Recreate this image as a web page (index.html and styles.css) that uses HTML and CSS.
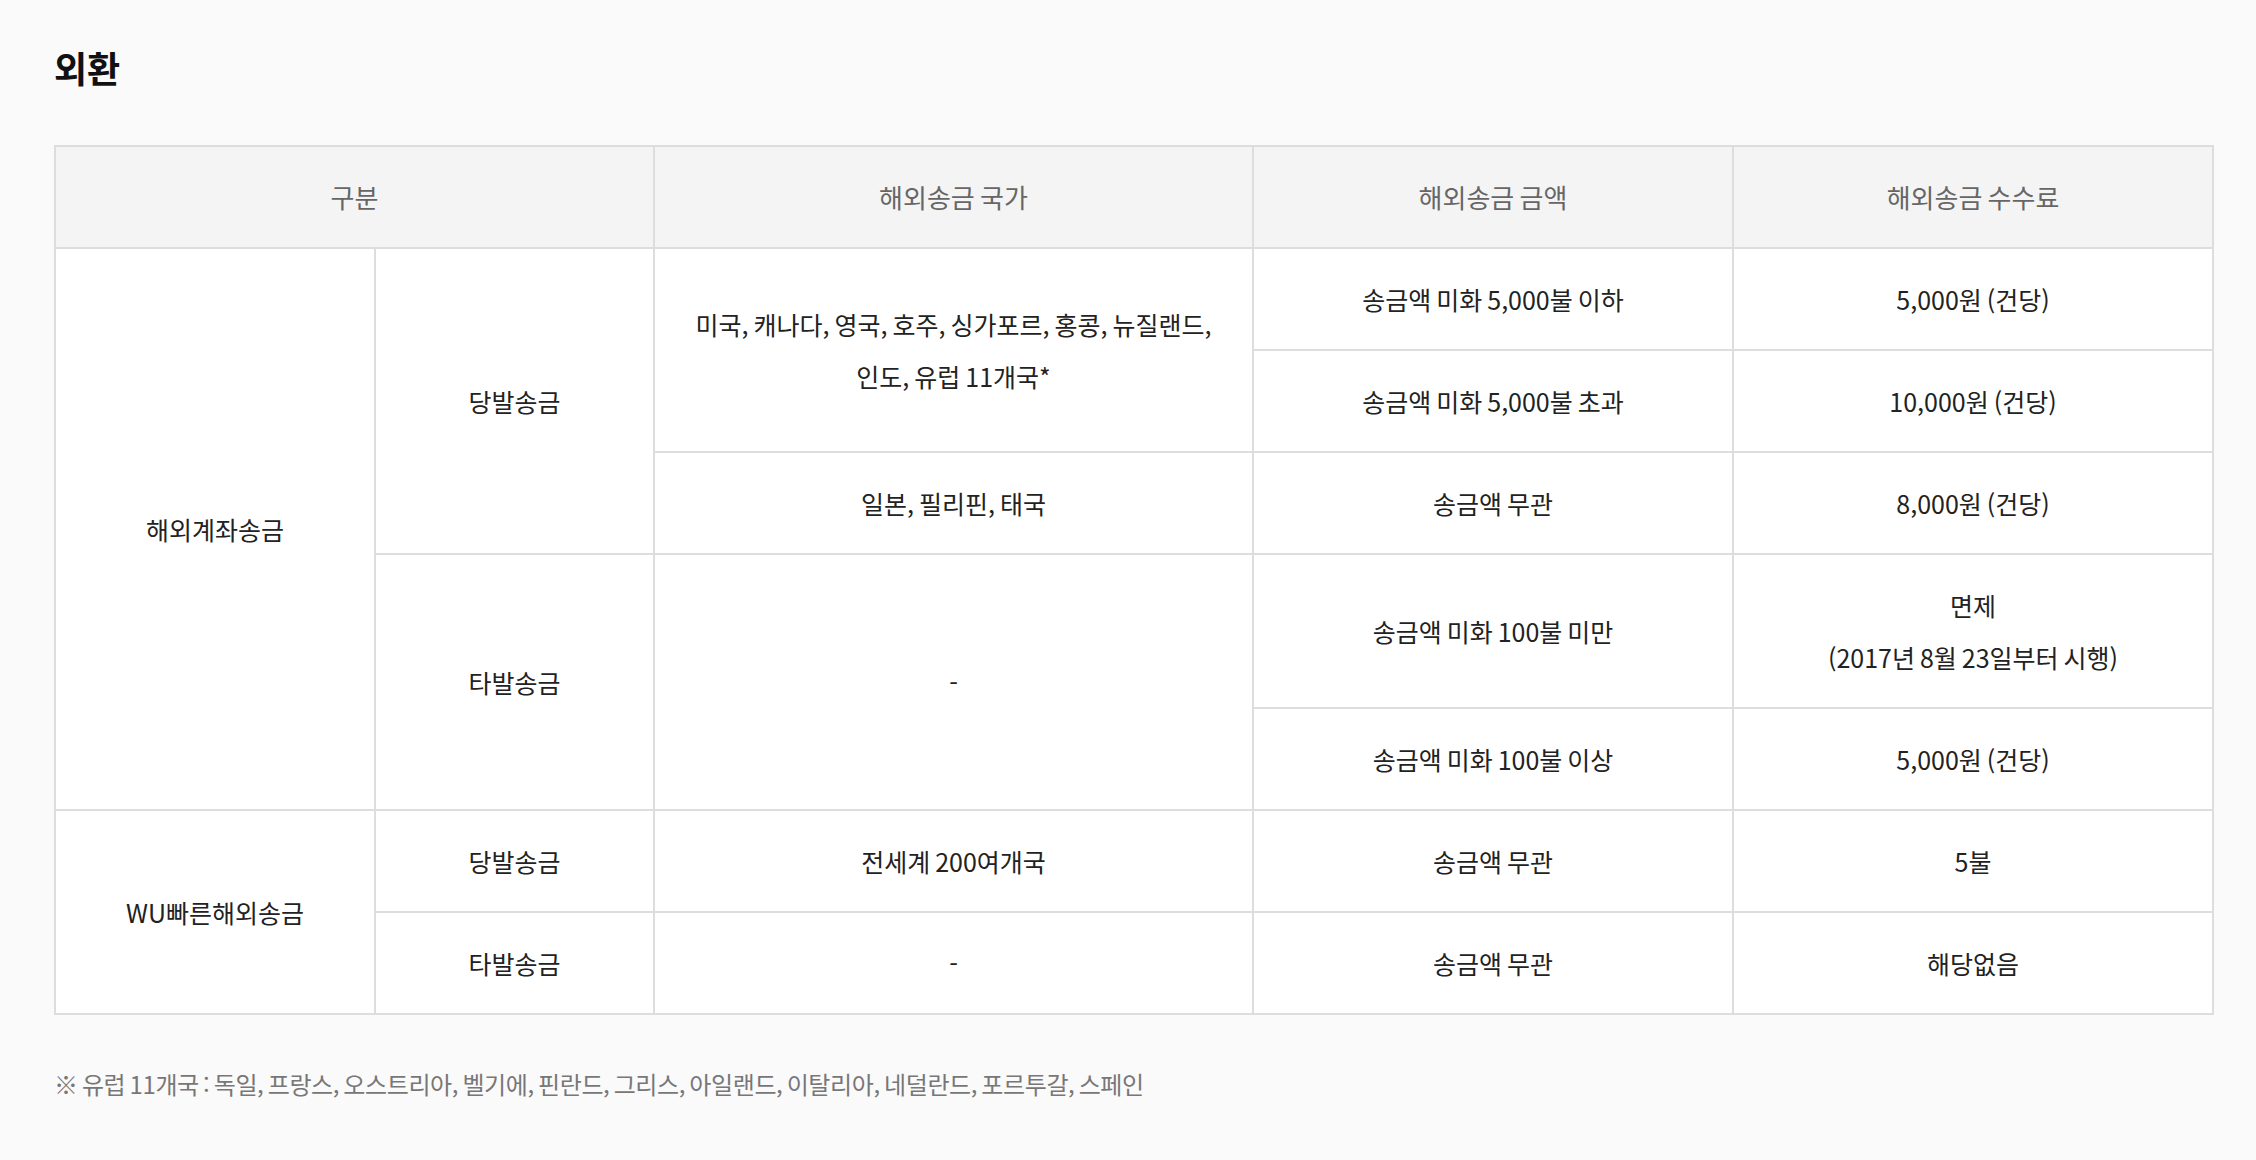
FILE: index.html
```html
<!DOCTYPE html>
<html lang="ko">
<head>
  <meta charset="utf-8">
  <title>외환 수수료</title>
  <link rel="stylesheet" href="styles.css">
</head>
<body>

  <div class="page">
    <h2 class="title">외환</h2>

    <table class="fee-table">
      <colgroup>
        <col class="col-type">
        <col class="col-sub">
        <col class="col-country">
        <col class="col-amount">
        <col class="col-fee">
      </colgroup>
      <thead>
        <tr>
          <th colspan="2">구분</th>
          <th>해외송금 국가</th>
          <th>해외송금 금액</th>
          <th>해외송금 수수료</th>
        </tr>
      </thead>
      <tbody>
        <!-- 해외계좌송금 -->
        <tr>
          <td rowspan="5">해외계좌송금</td>
          <td rowspan="3">당발송금</td>
          <td rowspan="2">미국, 캐나다, 영국, 호주, 싱가포르, 홍콩, 뉴질랜드,<br>인도, 유럽 11개국*</td>
          <td>송금액 미화 5,000불 이하</td>
          <td>5,000원 (건당)</td>
        </tr>
        <tr>
          <td>송금액 미화 5,000불 초과</td>
          <td>10,000원 (건당)</td>
        </tr>
        <tr>
          <td>일본, 필리핀, 태국</td>
          <td>송금액 무관</td>
          <td>8,000원 (건당)</td>
        </tr>
        <tr>
          <td rowspan="2">타발송금</td>
          <td rowspan="2">-</td>
          <td>송금액 미화 100불 미만</td>
          <td>면제<br>(2017년 8월 23일부터 시행)</td>
        </tr>
        <tr>
          <td>송금액 미화 100불 이상</td>
          <td>5,000원 (건당)</td>
        </tr>

        <!-- WU빠른해외송금 -->
        <tr>
          <td rowspan="2">WU빠른해외송금</td>
          <td>당발송금</td>
          <td>전세계 200여개국</td>
          <td>송금액 무관</td>
          <td>5불</td>
        </tr>
        <tr>
          <td>타발송금</td>
          <td>-</td>
          <td>송금액 무관</td>
          <td>해당없음</td>
        </tr>
      </tbody>
    </table>

    <p class="note">※ 유럽 11개국 : 독일, 프랑스, 오스트리아, 벨기에, 핀란드, 그리스, 아일랜드, 이탈리아, 네덜란드, 포르투갈, 스페인</p>
  </div>

</body>
</html>
```

FILE: styles.css
```css
body {
  margin: 0;
  background: #fafafa;
  font-family: "Noto Sans CJK KR", "Noto Sans", sans-serif;
  color: #222;
}

.page {
  padding: 43px 44px 0 54px;
}

.title {
  margin: 0 0 54px;
  font-size: 36px;
  line-height: 48px;
  font-weight: 700;
  color: #111;
}

.fee-table {
  border-collapse: collapse;
  table-layout: fixed;
  width: 2158px;
  background: #fff;
}

.col-type { width: 320px; }
.col-sub { width: 279px; }
.col-country { width: 599px; }
.col-amount { width: 480px; }
.col-fee { width: 480px; }

.fee-table th,
.fee-table td {
  border: 2px solid #dddddd;
  padding: 24px 10px;
  font-size: 25px;
  line-height: 52px;
  text-align: center;
  vertical-align: middle;
  word-spacing: -2px;
}

.fee-table th {
  background: #f4f4f4;
  font-size: 26px;
  font-weight: 400;
  color: #666;
}

.fee-table td {
  color: #222;
}

.note {
  margin: 51px 0 0;
  font-size: 24px;
  line-height: 36px;
  letter-spacing: -0.4px;
  word-spacing: -2px;
  color: #777;
}
```
